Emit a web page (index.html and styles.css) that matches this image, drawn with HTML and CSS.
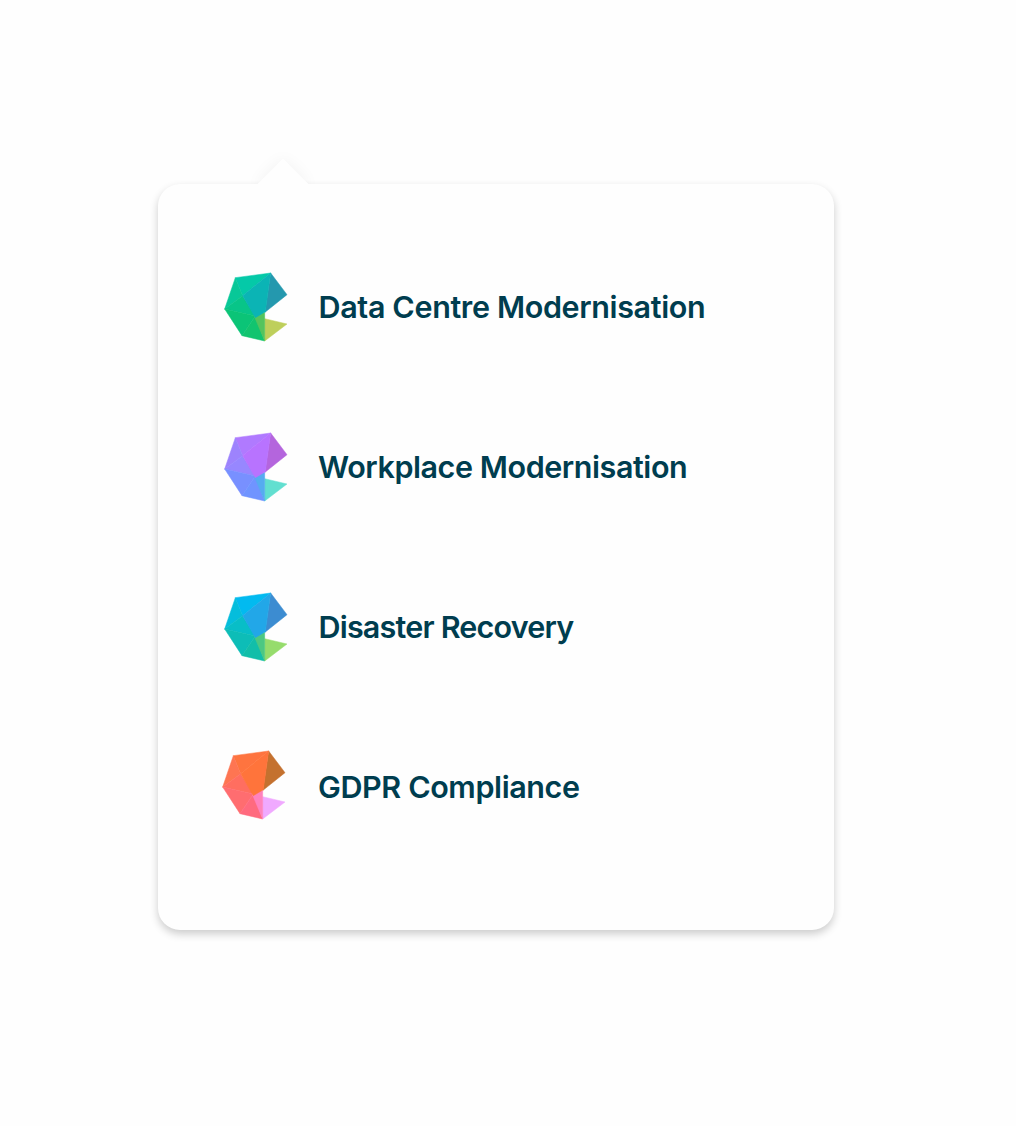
FILE: index.html
```html
<!DOCTYPE html>
<html lang="en">
<head>
<meta charset="utf-8">
<title>Solutions</title>
<link rel="stylesheet" href="styles.css">
</head>
<body>
<svg width="0" height="0" class="defs">
  <symbol id="gem" viewBox="0 0 240 252">
    <path class="f-top" d="M58 38L164 24L80 92Z"/>
    <path class="f-left" d="M58 38L80 92L26 132Z"/>
    <path class="f-inner" d="M80 92L26 132L118 153Z"/>
    <path class="f-low" d="M26 132L118 153L78 212Z"/>
    <path class="f-base" d="M118 153L78 212L146 228Z"/>
    <path class="f-jaw" d="M146 161L213 177L146 228Z"/>
    <path class="f-join" d="M114 152L146 142L146 228Z"/>
    <path class="f-right" d="M164 24L213 89L147 142Z"/>
    <path class="f-mid" d="M164 24L80 92L118 158L148 140Z"/>
  </symbol>
</svg>
<nav class="menu">
  <a class="item green"><svg class="icon"><use href="#gem"/></svg><span class="label centre">Data Centre Modernisation</span></a>
  <a class="item purple"><svg class="icon"><use href="#gem"/></svg><span class="label workplace">Workplace Modernisation</span></a>
  <a class="item blue"><svg class="icon"><use href="#gem"/></svg><span class="label recovery">Disaster Recovery</span></a>
  <a class="item orange"><svg class="icon"><use href="#gem"/></svg><span class="label gdpr">GDPR Compliance</span></a>
</nav>
</body>
</html>
```
FILE: styles.css
```css
* { box-sizing: border-box; }
html { background: #fefefe; }
body { margin: 0; height: 1126px; padding: 184px 0 0 158px; overflow: hidden; font-family: Inter, "Liberation Sans", sans-serif; }
.defs { position: absolute; }
.menu {
  position: relative;
  width: 676px;
  height: 746px;
  padding: 43px 58px;
  border-radius: 22px;
  background: #fefefe;
  box-shadow: 0 4px 8px rgba(0, 0, 0, .2);
}
.menu::before {
  content: "";
  position: absolute;
  left: 107px;
  top: -18px;
  width: 36px;
  height: 36px;
  transform: rotate(45deg);
  background: #fefefe;
  box-shadow: 0 0 16px rgba(0, 0, 0, .05);
  clip-path: polygon(-24px -24px, 60px -24px, 36px 0, 0 36px, -24px 60px);
}
.item { display: flex; align-items: center; height: 160px; gap: 22px; color: #003d4f; }
.icon { width: 80px; height: 84px; flex: none; }
.icon { stroke-width: 1.5; stroke-linejoin: round; }
.label { font-size: 30.5px; font-weight: 600; line-height: 40px; white-space: nowrap; }
.centre { letter-spacing: -.36px; padding-left: .5px; }
.workplace { letter-spacing: -.43px; }
.recovery { letter-spacing: -.8px; padding-left: .5px; }
.gdpr { letter-spacing: -.4px; }
.orange .icon { margin: -4px 2px 0 -2px; }

.f-top { fill: var(--top); stroke: var(--top); }
.f-left { fill: var(--left); stroke: var(--left); }
.f-mid { fill: var(--mid); stroke: var(--mid); }
.f-right { fill: var(--right); stroke: var(--right); }
.f-inner { fill: var(--inner); stroke: var(--inner); }
.f-low { fill: var(--low); stroke: var(--low); }
.f-base { fill: var(--base); stroke: var(--base); }
.f-join { fill: var(--join); stroke: var(--join); }
.f-jaw { fill: var(--jaw); stroke: var(--jaw); }

.green { --top: #04c9a8; --left: #08c898; --mid: #0bb4b5; --right: #2498ae; --inner: #08c588; --low: #0bc477; --base: #12c46f; --join: #55c45d; --jaw: #becf5b; }
.purple { --top: #b07aff; --left: #9d83fd; --mid: #b873ff; --right: #b465dd; --inner: #9787ff; --low: #7890ff; --base: #7094ff; --join: #55acf0; --jaw: #62dfd0; }
.blue { --top: #02baf0; --left: #05bddc; --mid: #22a7e8; --right: #3c8cd1; --inner: #08bec7; --low: #0dbdb7; --base: #12bea9; --join: #4dc882; --jaw: #96dc6c; }
.orange { --top: #fe743f; --left: #fe7552; --mid: #ff743b; --right: #c4712f; --inner: #ff6e60; --low: #ff6d70; --base: #ff6a7e; --join: #ff82bd; --jaw: #f0a9ff; }
```
